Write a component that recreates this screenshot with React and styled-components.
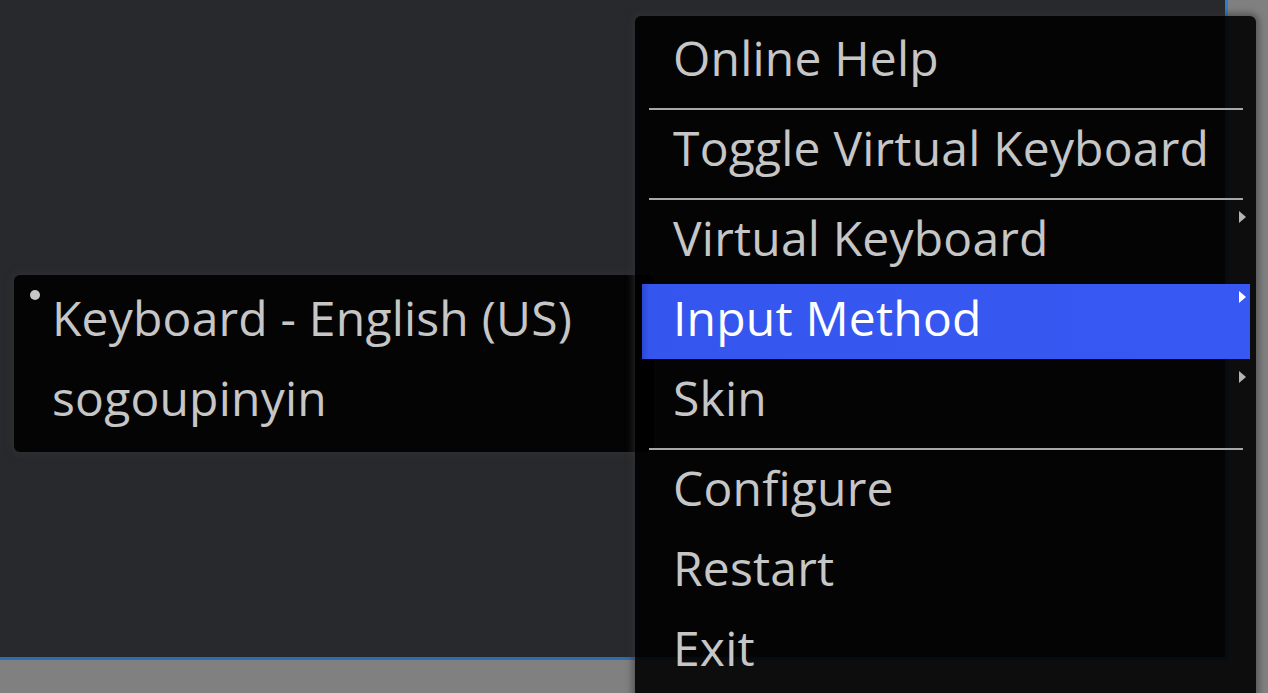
import React from 'react'
import styled, { createGlobalStyle } from 'styled-components'

const GlobalStyle = createGlobalStyle`
	html, body {
		margin: 0;
		padding: 0;
		background: #808080;
		overflow: hidden;
	}
	body {
		font-family: "Open Sans", "Noto Sans", sans-serif;
	}
`

const Screen = styled.div`
	position: relative;
	width: 1268px;
	height: 693px;
	overflow: hidden;
	background: #808080;
`

const Window = styled.div`
	width: 1225px;
	height: 657px;
	background: #28292c;
	border-right: 3px solid #2a7fd4;
	border-bottom: 3px solid #2a6fb0;
`

// popup menus float over the window
const Popup = styled.div`
	position: absolute;
	left: ${(p) => p.left}px;
	top: ${(p) => p.top}px;
	width: ${(p) => p.width}px;
	padding: ${(p) => p.pad};
	box-sizing: border-box;
	background: rgba(0, 0, 0, 0.9);
	border-radius: 6px;
	box-shadow: 0 0 6px 3px rgba(52, 53, 56, 0.55);
	display: flex;
	flex-direction: column;
`

const Item = styled.div`
	height: 80px;
	box-sizing: border-box;
	display: flex;
	align-items: center;
	padding: 0 4px 6px ${(p) => p.indent}px;
	margin: 0 6px 0 7px;
	font-size: 48px;
	line-height: 74px;
	letter-spacing: 0.2px;
	color: ${(p) => (p.active ? '#ffffff' : '#c6c6c6')};
	white-space: nowrap;
	background: ${(p) =>
		p.active
			? 'linear-gradient(to right, #2b48d2 0, #3556ee 7px, #3758f2 100%)'
			: 'transparent'};
	clip-path: ${(p) => (p.active ? 'inset(3px 0 2px 0)' : 'none')};
`

const Label = styled.span`
	flex: 0 0 auto;
`

const Separator = styled.div`
	height: 10px;
	box-sizing: border-box;
	display: flex;
	align-items: flex-end;
	padding-bottom: 1px;
	margin: 0 13px 0 14px;

	&::after {
		content: '';
		flex: 1;
		height: 2px;
		background: #a8a8a8;
	}
`

const Arrow = styled.span`
	margin-left: auto;
	align-self: flex-start;
	margin-top: 10px;
	width: 0;
	height: 0;
	border-top: 6px solid transparent;
	border-bottom: 6px solid transparent;
	border-left: 7px solid ${(p) => (p.active ? '#ffffff' : '#b4b4b4')};
`

const Bullet = styled.span`
	flex: 0 0 10px;
	height: 10px;
	align-self: flex-start;
	margin: 9px 12px 0 0;
	border-radius: 50%;
	background: ${(p) => (p.on ? '#c6c6c6' : 'transparent')};
`

const mainItems = [
	{ label: 'Online Help' },
	{ sep: true },
	{ label: 'Toggle Virtual Keyboard' },
	{ sep: true },
	{ label: 'Virtual Keyboard', sub: true },
	{ label: 'Input Method', sub: true, active: true },
	{ label: 'Skin', sub: true },
	{ sep: true },
	{ label: 'Configure' },
	{ label: 'Restart' },
	{ label: 'Exit' },
]

const imItems = [
	{ label: 'Keyboard - English (US)', checked: true },
	{ label: 'sogoupinyin' },
]

const App = () => {
	return (
		<Screen>
			<GlobalStyle />
			<Window />
			<Popup left={14} top={275} width={640} pad="6px 0 11px 0">
				{imItems.map((it) => (
					<Item key={it.label} indent={9}>
						<Bullet on={it.checked} />
						<Label>{it.label}</Label>
					</Item>
				))}
			</Popup>
			<Popup left={635} top={16} width={621} pad="5px 0 10px 0">
				{mainItems.map((it, i) =>
					it.sep ? (
						<Separator key={i} />
					) : (
						<Item key={i} indent={31} active={it.active}>
							<Label>{it.label}</Label>
							{it.sub && <Arrow active={it.active} />}
						</Item>
					)
				)}
			</Popup>
		</Screen>
	)
}

export default App
